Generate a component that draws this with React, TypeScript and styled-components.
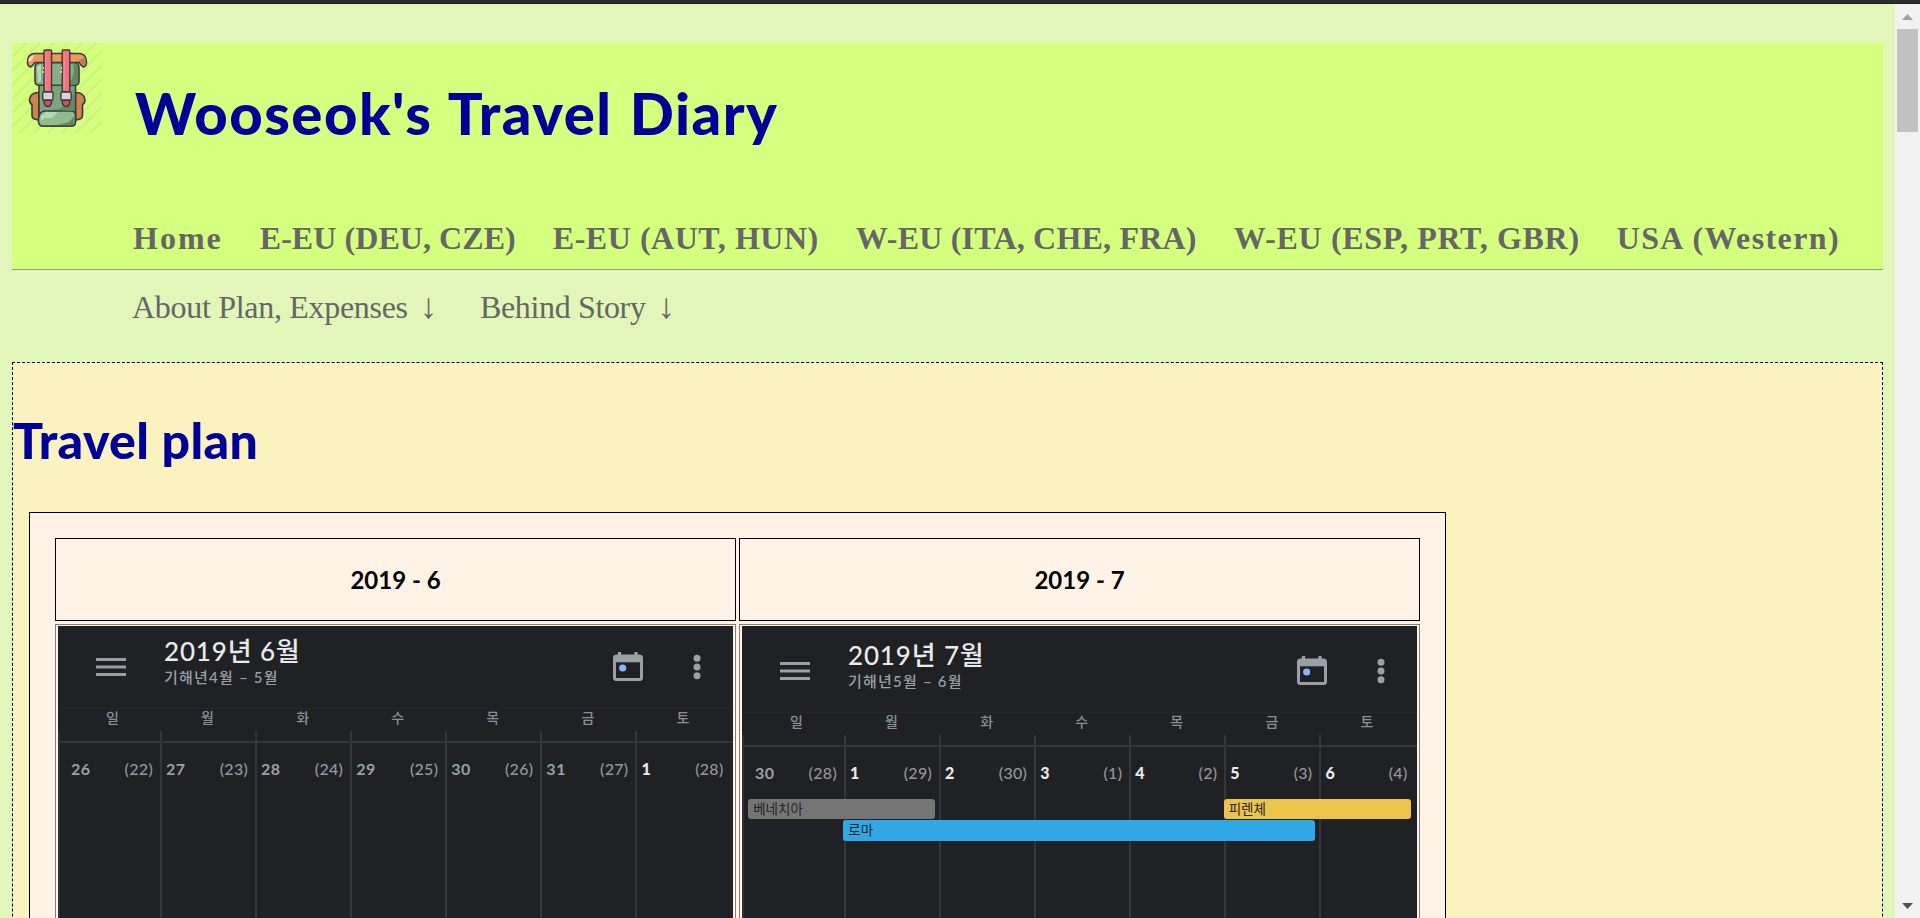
import React from "react";
import styled, { createGlobalStyle } from "styled-components";

const GlobalStyle = createGlobalStyle`
  * { box-sizing: border-box; }
  html, body { margin: 0; padding: 0; height: 918px; overflow: hidden; }
`;

const latin = `Lato, "Noto Sans CJK KR", sans-serif`;
const serif = `"Liberation Serif", Georgia, serif`;

const Screen = styled.div`
  display: flex;
  flex-direction: column;
  width: 1920px;
  height: 918px;
  overflow: hidden;
  background: #e3f6b9;
`;

const WindowEdge = styled.div`
  flex: none;
  height: 4px;
  background: #2d2d2d;
  border-bottom: 1px solid #1f1f1f;
`;

const Viewport = styled.div`
  display: flex;
  flex: 1;
  min-height: 0;
`;

const Page = styled.div`
  flex: 1;
  min-width: 0;
  padding: 39px 12px 0;
  overflow: hidden;
`;

const Header = styled.header`
  height: 229px;
  background: #d5ff7f;
  border-bottom: 1px solid #eee;
  display: flex;
  flex-direction: column;
`;

const TitleRow = styled.div`
  display: flex;
  height: 174px;
`;

const SiteTitle = styled.h1`
  margin: 34px 0 0 33px;
  font: 900 58px/72px ${latin};
  letter-spacing: 1.5px;
  word-spacing: 2px;
  color: #000099;
  white-space: nowrap;
`;

const Nav = styled.nav`
  display: flex;
  gap: 37px;
  height: 53px;
  padding-left: 121px;
  border-bottom: 1px solid #96a078;
  margin-bottom: 1px;
`;

const NavLink = styled.a<{ $track: number }>`
  font: bold 32px/42px ${serif};
  letter-spacing: ${(p) => p.$track}px;
  color: #666;
  white-space: nowrap;
`;

const SubNav = styled.nav`
  display: flex;
  height: 90px;
  padding: 15px 0 0 120px;
  gap: 43px;
`;

const SubLink = styled.a<{ $track: number }>`
  display: flex;
  gap: 12px;
  font: 32px/40px ${serif};
  letter-spacing: ${(p) => p.$track}px;
  color: #666;
  white-space: nowrap;
`;

const DownArrow = styled.span`
  font-size: 35px;
`;

const Content = styled.main`
  height: 700px;
  border: 1px dashed #000;
  background: #faf3c0;
`;

const SectionTitle = styled.h2`
  margin: 47px 0 42px;
  font: 900 50px/60px ${latin};
  letter-spacing: 0.35px;
  color: #000099;
`;

const PlanTable = styled.div`
  display: grid;
  grid-template-columns: 681px 681px;
  grid-template-rows: 83px 500px;
  gap: 3px;
  width: 1417px;
  margin-left: 16px;
  padding: 25px;
  border: 1px solid #000;
  background: #fff2e6;
`;

const MonthHeading = styled.div`
  display: flex;
  align-items: center;
  justify-content: center;
  border: 1px solid #000;
  font: bold 24px/30px ${latin};
  color: #000;
`;

const MonthCell = styled.div`
  padding: 1px 2px 2px;
  border: 1px solid #808080;
`;

const Calendar = styled.div<{ $top: number }>`
  height: 495px;
  padding-top: ${(p) => p.$top}px;
  background: #202124;
  font-family: ${latin};
  overflow: hidden;
`;

const CalendarBar = styled.div`
  display: flex;
  height: 83px;
  padding-left: 38px;
  border-bottom: 1px solid #26272b;
`;

const MenuIcon = styled.svg`
  flex: none;
  width: 30px;
  height: 18px;
  margin-top: 32px;
`;

const MonthNames = styled.div`
  flex: none;
  width: 487px;
  padding: 10px 0 0 38px;
  font-weight: 500;
  white-space: nowrap;
`;

const MonthName = styled.div`
  font-size: 26px;
  line-height: 30px;
  letter-spacing: 0.85px;
  color: #e8eaed;
`;

const LunarName = styled.div`
  margin-top: 1px;
  font-size: 15px;
  line-height: 20px;
  letter-spacing: 1.2px;
  color: #9aa0a6;
`;

const TodayIcon = styled.svg`
  flex: none;
  width: 30px;
  height: 30px;
  margin-top: 26px;
`;

const MoreIcon = styled.svg`
  flex: none;
  width: 8px;
  height: 26px;
  margin: 28px 0 0 50px;
`;

const Columns = styled.div`
  display: grid;
  grid-template-columns: repeat(7, 95.1px);
  padding-left: 6.9px;
`;

const Weekday = styled.div`
  height: 22px;
  font-size: 14px;
  font-weight: 500;
  line-height: 18px;
  text-align: center;
  color: #8b8e94;
`;

const Weeks = styled.div`
  border-left: 2px solid #2f3034;
`;

const TickRow = styled(Columns)`
  padding-left: 4.9px;
  height: 11.5px;
  border-bottom: 2px solid #35363a;
`;

const Tick = styled.div`
  border-left: 2px solid #35363a;
  &:first-child { border-color: transparent; }
`;

const WeekRow = styled.div`
  position: relative;
`;

const DayRow = styled(Columns)`
  padding-left: 4.9px;
  height: 400px;
`;

const Day = styled.div`
  display: flex;
  justify-content: space-between;
  padding: 16px 7px 0 4px;
  border-left: 2px solid #35363a;
  font-size: 16px;
  line-height: 20px;
  &:first-child { border-color: transparent; }
`;

const DayNumber = styled.span<{ $current: boolean }>`
  font-weight: ${(p) => (p.$current ? 900 : 700)};
  letter-spacing: 0.5px;
  color: ${(p) => (p.$current ? "#e8eaed" : "#9aa0a6")};
`;

const LunarDay = styled.span`
  letter-spacing: 0.3px;
  font-weight: 500;
  color: #94979d;
`;

const EventLayer = styled(Columns)`
  position: absolute;
  top: 52px;
  left: 0;
  padding-left: 4.9px;
  grid-auto-rows: 20.5px;
  row-gap: 1px;
`;

const EventChip = styled.div<{ $from: number; $to: number; $row: number; $color: string }>`
  grid-column: ${(p) => p.$from} / ${(p) => p.$to};
  grid-row: ${(p) => p.$row};
  margin: 0 4px 0 -0.7px;
  padding-left: 5px;
  border-radius: 3px;
  background: ${(p) => p.$color};
  font-size: 13.5px;
  line-height: 20px;
  color: #252628;
`;

const ScrollTrack = styled.div`
  display: flex;
  flex-direction: column;
  align-items: center;
  flex: none;
  width: 25px;
  background: #f1f1f1;
`;

const ScrollThumb = styled.div`
  width: 21px;
  height: 103px;
  margin-bottom: auto;
  background: #c1c1c1;
`;

const ScrollArrow = styled.svg`
  flex: none;
  width: 25px;
  height: 25px;
`;

const navItems = [
  { label: "Home", track: 2 },
  { label: "E-EU (DEU, CZE)", track: 0.06 },
  { label: "E-EU (AUT, HUN)", track: 0.53 },
  { label: "W-EU (ITA, CHE, FRA)", track: 0.2 },
  { label: "W-EU (ESP, PRT, GBR)", track: 0.66 },
  { label: "USA (Western)", track: 1.38 },
];

const weekdays = ["일", "월", "화", "수", "목", "금", "토"];

type Chip = { label: string; from: number; to: number; row: number; color: string };
type Month = {
  heading: string;
  name: string;
  lunar: string;
  top: number;
  days: [number, number, boolean][];
  events: Chip[];
};

const months: Month[] = [
  {
    heading: "2019 - 6",
    name: "2019년 6월",
    lunar: "기해년4월 – 5월",
    top: 0,
    days: [[26, 22, false], [27, 23, false], [28, 24, false], [29, 25, false], [30, 26, false], [31, 27, false], [1, 28, true]],
    events: [],
  },
  {
    heading: "2019 - 7",
    name: "2019년 7월",
    lunar: "기해년5월 – 6월",
    top: 4,
    days: [[30, 28, false], [1, 29, true], [2, 30, true], [3, 1, true], [4, 2, true], [5, 3, true], [6, 4, true]],
    events: [
      { label: "베네치아", from: 1, to: 3, row: 1, color: "#757575" },
      { label: "피렌체", from: 6, to: 8, row: 1, color: "#ecc34b" },
      { label: "로마", from: 2, to: 7, row: 2, color: "#31a8e4" },
    ],
  },
];

const BackpackSvg = styled.svg`
  flex: none;
  width: 90px;
  height: 90px;
`;

function Backpack() {
  const stripes = Array.from({ length: 13 }, (_, i) => -76 + i * 14);
  return (
    <BackpackSvg viewBox="0 0 90 90">
      <g stroke="#cbf27c" strokeWidth="2">
        {stripes.map((x) => (
          <path key={x} d={`M${x} 90L${x + 90} 0`} />
        ))}
      </g>
      <g stroke="#3a3b3c" strokeWidth="1.6" strokeLinejoin="round">
        <path d="M22 10.5h46q6.500 1 6.500 8.500q0 4-3 5q-2-1-4.500-4.500H23q-2.500 3.500-4.500 4.500q-3-1-3-5q0-7.500 6.500-8.500z" fill="#e9985f" />
        <path d="M27 49.500q-8-.500-9.500 7q0 4 2.500 5v11q0 4 7 4.500zM63.500 49.500q8-.500 9.500 7q0 4-2.500 5v11q0 4-7 4.500z" fill="#cf8450" />
        <path d="M27 41h36.500v38q0 4-4 4h-28.500q-4 0-4-4z" fill="#7ba57c" />
        <path d="M28 19.700h34q5 0 5 5v13q0 4-3.500 4.500h-37q-3.500-.5-3.500-4.500v-13q0-5 5-5z" fill="#85b086" />
        <path d="M32 68h27q4 0 4.500 4v7q-.500 4-4.500 4H31q-4 0-4.500-4v-4q1-6 5.500-7z" fill="#8fbd91" />
      </g>
      <path d="M19 13q-3 2-2.500 6l3-1l3-6z" fill="#fbd3b4" />
      <path d="M73.500 14l-9 5h4l4 4z" fill="#c17a4c" />
      <path d="M66 21.500v18l-2.500 2H50l9-4q4-8 2-17zM62.500 43v25l-18-1l14-6zM62.500 73v7l-2 2H45l12-3z" fill="#66885f" />
      <path d="M25 24l4-3v17l-3 2zM29 73l5-4h12l-6 6h-8l-3 3z" fill="#b4d7b4" />
      {[32, 50.200].map((x) => (
        <g key={x} stroke="#3a3b3c" strokeWidth="1.4">
          <path d={`M${x} 57h7.600v2.500q-1 4-3.800 4t-3.800-4z`} fill="#e3485f" />
          <rect x={x} y="7" width="7.600" height="42" rx="1" fill="#f3727f" />
          <rect x={x - 1.300} y="49" width="10.300" height="8" rx="1" fill="#d5d5d8" />
          <path d={`M${x + 2} 9v38`} stroke="#f9939c" strokeWidth="1" />
        </g>
      ))}
      <path d="M31 25h1M30.500 29h1.500M49 25h1M48.500 29h1.500" stroke="#cfe6cf" strokeWidth="2" />
    </BackpackSvg>
  );
}

function MonthCalendar({ month }: { month: Month }) {
  return (
    <Calendar $top={month.top}>
      <CalendarBar>
        <MenuIcon viewBox="0 0 30 18">
          <path d="M0 1.500h30M0 9h30M0 16.400h30" stroke="#9aa0a6" strokeWidth="3" />
        </MenuIcon>
        <MonthNames>
          <MonthName>{month.name}</MonthName>
          <LunarName>{month.lunar}</LunarName>
        </MonthNames>
        <TodayIcon viewBox="0 0 30 30">
          <path d="M6.500 0v5M23 0v5" stroke="#9aa0a6" strokeWidth="3.200" />
          <rect x="1.500" y="4" width="27" height="23.500" rx="2" fill="none" stroke="#9aa0a6" strokeWidth="3" />
          <path d="M1.500 4h27v6.300h-27z" fill="#9aa0a6" />
          <circle cx="9.700" cy="16" r="3.600" fill="#8ab4f8" />
        </TodayIcon>
        <MoreIcon viewBox="0 0 8 26">
          <g fill="#9aa0a6">
            <circle cx="4" cy="4.300" r="3.500" />
            <circle cx="4" cy="13" r="3.500" />
            <circle cx="4" cy="21.800" r="3.500" />
          </g>
        </MoreIcon>
      </CalendarBar>
      <Columns>
        {weekdays.map((d) => (
          <Weekday key={d}>{d}</Weekday>
        ))}
      </Columns>
      <Weeks>
        <TickRow>
          {weekdays.map((d) => (
            <Tick key={d} />
          ))}
        </TickRow>
        <WeekRow>
          <DayRow>
            {month.days.map(([day, lunar, current]) => (
              <Day key={day}>
                <DayNumber $current={current}>{day}</DayNumber>
                <LunarDay>({lunar})</LunarDay>
              </Day>
            ))}
          </DayRow>
          <EventLayer>
            {month.events.map((e) => (
              <EventChip key={e.label} $from={e.from} $to={e.to} $row={e.row} $color={e.color}>
                {e.label}
              </EventChip>
            ))}
          </EventLayer>
        </WeekRow>
      </Weeks>
    </Calendar>
  );
}

export default function App() {
  return (
    <Screen>
      <GlobalStyle />
      <WindowEdge />
      <Viewport>
        <Page>
          <Header>
            <TitleRow>
              <Backpack />
              <SiteTitle>Wooseok's Travel Diary</SiteTitle>
            </TitleRow>
            <Nav>
              {navItems.map((item) => (
                <NavLink key={item.label} $track={item.track}>
                  {item.label}
                </NavLink>
              ))}
            </Nav>
          </Header>
          <SubNav>
            <SubLink $track={-0.3}>
              <span>About Plan, Expenses</span>
              <DownArrow>↓</DownArrow>
            </SubLink>
            <SubLink $track={-0.35}>
              <span>Behind Story</span>
              <DownArrow>↓</DownArrow>
            </SubLink>
          </SubNav>
          <Content>
            <SectionTitle>Travel plan</SectionTitle>
            <PlanTable>
              {months.map((m) => (
                <MonthHeading key={m.heading}>{m.heading}</MonthHeading>
              ))}
              {months.map((m) => (
                <MonthCell key={m.name}>
                  <MonthCalendar month={m} />
                </MonthCell>
              ))}
            </PlanTable>
          </Content>
        </Page>
        <ScrollTrack>
          <ScrollArrow viewBox="0 0 25 25">
            <path d="M7 16L12.500 10L18 16z" fill="#a3a3a3" />
          </ScrollArrow>
          <ScrollThumb />
          <ScrollArrow viewBox="0 0 25 25">
            <path d="M7 10L12.500 16L18 10z" fill="#505050" />
          </ScrollArrow>
        </ScrollTrack>
      </Viewport>
    </Screen>
  );
}
